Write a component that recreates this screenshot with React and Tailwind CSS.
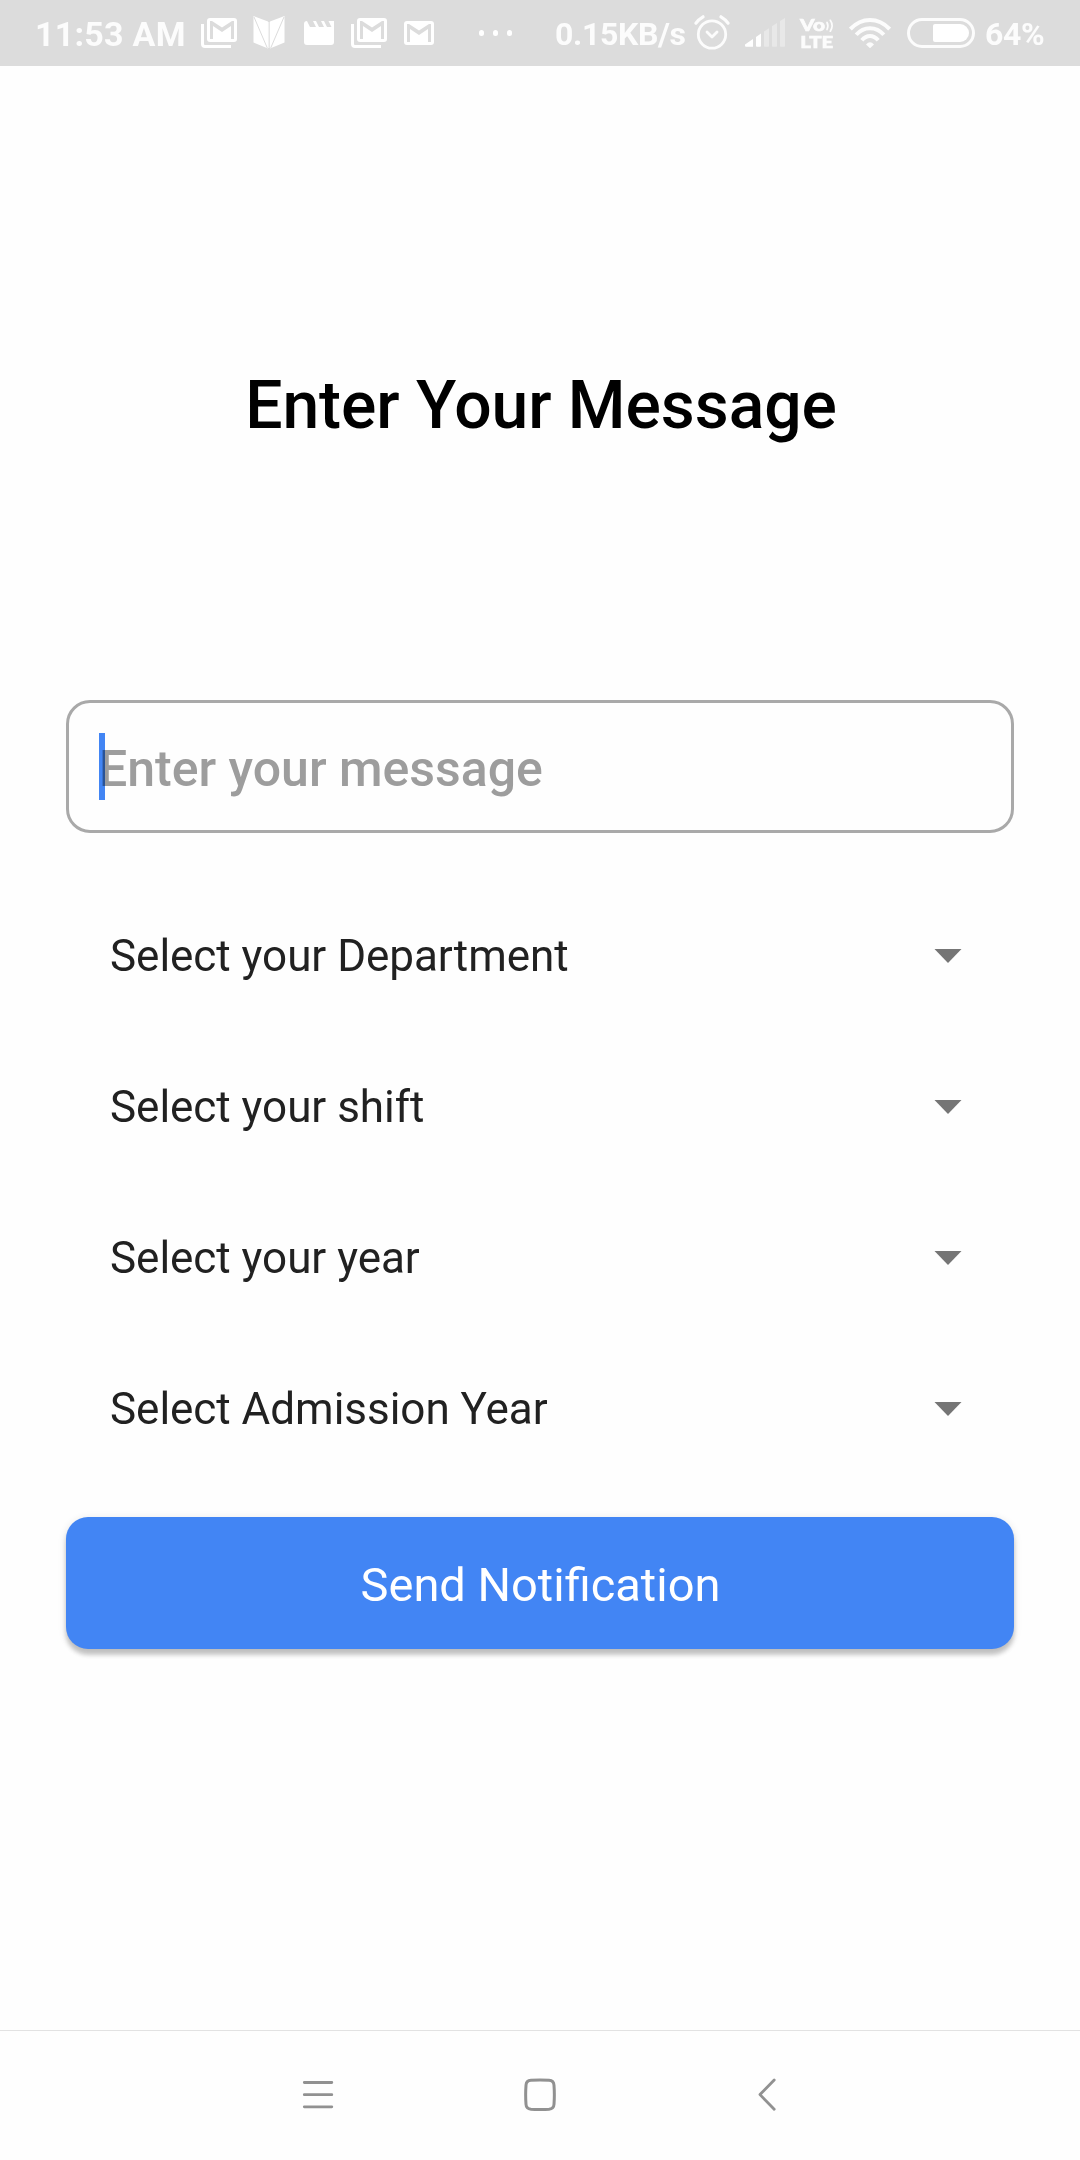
function GmailStack({ className }) {
  return (
    <svg className={className} width="36" height="30" viewBox="0 0 36 30" fill="none">
      <path d="M1.5 6V26Q1.5 28.5 4 28.5H30" stroke="#fff" strokeWidth="3" />
      <path
        fill="#fff"
        fillRule="evenodd"
        d="M9 0H33Q36 0 36 3V21Q36 24 33 24H9Q6 24 6 21V3Q6 0 9 0ZM9 3V21H12V8L21 14L30 8V21H33V3H31L21 9.5L11 3Z"
      />
    </svg>
  );
}

function Mail({ className }) {
  return (
    <svg className={className} width="30" height="24" viewBox="0 0 30 24">
      <path
        fill="#fff"
        fillRule="evenodd"
        d="M3 0H27Q30 0 30 3V21Q30 24 27 24H3Q0 24 0 21V3Q0 0 3 0ZM3 3V21H6V8L15 14L24 8V21H27V3H25L15 9.5L5 3Z"
      />
    </svg>
  );
}

function Book({ className }) {
  return (
    <svg className={className} width="32" height="33" viewBox="0 0 32 33">
      <path fill="#fff" d="M0.5 0L15 5.5V32.5L0.5 26.5Z" />
      <path fill="#fff" d="M31.5 0L17 5.5V32.5L31.5 26.5Z" />
      <path d="M15.7 6V32" stroke="#f1f1f1" strokeWidth="1.6" />
      <path d="M1 1L14.3 32M31 1L17.7 32" stroke="#dcdcdc" strokeWidth="1" />
    </svg>
  );
}

function Clapper({ className }) {
  return (
    <svg className={className} width="30" height="24" viewBox="0 0 30 24">
      <path
        fill="#fff"
        d="M3 0L6 6H12L9 0H12L15 6H20L17 0H20L23 6H27.5L24.5 0H30V21Q30 24 27 24H3Q0 24 0 21V3Q0 0 3 0Z"
      />
    </svg>
  );
}

function Alarm({ className }) {
  return (
    <svg className={className} width="36" height="35" viewBox="0 0 36 35" fill="none" stroke="#fcfcfc" strokeLinecap="round">
      <circle cx="18" cy="19.5" r="13.7" strokeWidth="2.8" />
      <path d="M2 8.2Q4.8 4.2 9 1.8M34 8.2Q31.2 4.2 27 1.8" strokeWidth="3.2" />
      <path d="M13 17L18 22L23 17" strokeWidth="2.8" strokeLinejoin="round" />
    </svg>
  );
}

function Signal({ className }) {
  return (
    <svg className={className} width="40" height="29" viewBox="0 0 40 29">
      <path fill="#fff" d="M0 26.5L8 21V28.8H1Q0 28.8 0 27.8Z" />
      <path fill="#fff" d="M11 19L16 15.5V28Q16 28.8 15 28.8H12Q11 28.8 11 28Z" />
      <g fill="#e8e8e8">
        <path d="M19 13.5L24 10.2V28Q24 28.8 23 28.8H20Q19 28.8 19 28Z" />
        <path d="M27 8.2L32 5V28Q32 28.8 31 28.8H28Q27 28.8 27 28Z" />
        <path d="M35 3L40 0V28Q40 28.8 39 28.8H36Q35 28.8 35 28Z" />
      </g>
    </svg>
  );
}

function Volte({ className }) {
  return (
    <svg className={className} width="34" height="42" viewBox="0 -6 34 42" overflow="visible">
      <g fill="#fcfcfc" stroke="#fcfcfc" strokeWidth="0.6" fontFamily="Lato, sans-serif" fontWeight="900">
        <text x="0" y="12.8" fontSize="17.5" textLength="25" lengthAdjust="spacingAndGlyphs">Vo</text>
        <text x="0.3" y="29.6" fontSize="17.5" textLength="33" lengthAdjust="spacingAndGlyphs">LTE</text>
      </g>
      <path d="M27 4.5Q28.8 7.8 27 11.5M30.3 2.3Q33.9 7.5 30.3 13.2" fill="none" stroke="#fcfcfc" strokeWidth="1.7" strokeLinecap="round" />
    </svg>
  );
}

function Wifi({ className }) {
  return (
    <svg className={className} width="42" height="30" viewBox="0 0 42 30" fill="none" stroke="#fcfcfc" strokeWidth="4">
      <path d="M1.4 11Q10 2 21 2T40.6 11" />
      <path d="M7.2 16.8Q13 10.2 21 10.2T34.8 16.8" />
      <path d="M12.8 22.3Q16.5 18 21 18T29.2 22.3" />
      <path d="M17 26.6Q19 24.3 21 24.3T25 26.6L21 30.2Z" fill="#fcfcfc" stroke="none" />
    </svg>
  );
}

function StatusBar() {
  return (
    <header className="flex h-[66px] w-full items-start bg-[#dcdcdc] text-[#fcfcfc]">
      <span className="ml-[35px] mt-[14px] w-[151px] whitespace-nowrap text-[34px] font-bold leading-[40px] tracking-[0.25px]">11:53 AM</span>
      <GmailStack className="ml-[15px] mt-[18px] shrink-0" />
      <Book className="ml-[16px] mt-[16px] shrink-0" />
      <Clapper className="ml-[19px] mt-[21px] shrink-0" />
      <GmailStack className="ml-[17px] mt-[18px] shrink-0" />
      <Mail className="ml-[17px] mt-[21px] shrink-0" />
      <span className="ml-[45px] mt-[30px] flex w-[33px] shrink-0 justify-between">
        <i className="h-[6px] w-[5px] rounded-full bg-white" />
        <i className="h-[6px] w-[5px] rounded-full bg-white" />
        <i className="h-[6px] w-[5px] rounded-full bg-white" />
      </span>
      <span className="ml-[43px] mt-[14px] w-[134px] shrink-0 whitespace-nowrap text-[32px] font-bold leading-[40px] tracking-[-0.35px]">0.15KB/s</span>
      <Alarm className="ml-[5px] mt-[15px] shrink-0" />
      <Signal className="ml-[15px] mt-[18px] shrink-0" />
      <Volte className="ml-[15px] mt-[12px] shrink-0" />
      <Wifi className="ml-[15px] mt-[18px] shrink-0" />
      <span className="ml-[16px] mt-[18px] flex h-[30px] w-[68px] shrink-0 items-center justify-end rounded-full border-[3px] border-[#fcfcfc] pr-[3px]">
        <span className="h-[18px] w-[36px] rounded-l-[2px] rounded-r-[9px] bg-white" />
      </span>
      <span className="ml-[10px] mt-[14px] whitespace-nowrap text-[32px] font-bold leading-[40px] tracking-[-0.3px]">64%</span>
    </header>
  );
}

function Dropdown({ label }) {
  return (
    <div className="flex h-[151px] items-center justify-between pl-[44px] pr-[52px] text-[44px] leading-[54px] tracking-[-0.03px] text-[#212121]">
      <span>{label}</span>
      <svg width="28" height="14" viewBox="0 0 28 14">
        <path d="M0.5 0H27.5L14 14Z" fill="#757575" />
      </svg>
    </div>
  );
}

const fields = ["Select your Department", "Select your shift", "Select your year", "Select Admission Year"];

export default function App() {
  return (
    <div className="flex h-[2160px] w-[1080px] flex-col bg-[#fefefe] font-[Roboto,sans-serif]">
      <StatusBar />
      <main className="flex flex-1 flex-col px-[66px]">
        <h1 className="mt-[301px] pl-[2px] text-center text-[66px] font-medium leading-[78px] tracking-[-0.05px] text-black">Enter Your Message</h1>
        <div className="mt-[255px] flex h-[133px] items-center rounded-[24px] border-[3px] border-[#a9a9a9] pl-[30px]">
          <div className="relative text-[50px] font-medium leading-[60px] text-[#9e9e9e]">
            <span className="absolute -top-[4px] left-0 h-[67px] w-[6px] bg-[#4285f4]" />
            <span className="relative top-[2px] mix-blend-multiply">Enter your message</span>
          </div>
        </div>
        <div className="mt-[47px] flex flex-col">
          {fields.map((f) => (
            <Dropdown key={f} label={f} />
          ))}
        </div>
        <button className="mt-[33px] h-[132px] rounded-[22px] bg-[#4285f4] pl-px pt-[4px] text-[47px] leading-[56px] text-white shadow-[0_6px_4px_rgba(0,0,0,0.19),0_2px_8px_rgba(0,0,0,0.12)]">
          Send Notification
        </button>
      </main>
      <nav className="flex h-[130px] items-start border-t border-[#e2e2e2] pt-[47px]">
        <svg className="ml-[302px]" width="32" height="33" viewBox="0 0 32 33" fill="none" stroke="#919191" strokeWidth="2.8" strokeLinecap="round">
          <path d="M2.3 4.5H29.8M2.3 16.7H29.8M2.3 28.8H29.8" />
        </svg>
        <svg className="ml-[190px]" width="32" height="33" viewBox="0 0 32 33" fill="none" stroke="#919191" strokeWidth="3">
          <path d="M7 2.3Q16 1.7 25 2.3Q29.8 2.6 30 7.3Q30.7 16.6 30 26.3Q29.8 30.8 25 31.3Q16 31.9 7 31.3Q2.2 30.8 2 26.3Q1.3 16.6 2 7.3Q2.2 2.6 7 2.3Z" />
        </svg>
        <svg className="ml-[202px]" width="18" height="33" viewBox="0 0 18 33" fill="none" stroke="#919191" strokeWidth="2.8" strokeLinecap="round" strokeLinejoin="round">
          <path d="M16.2 2L2 16.6L16.2 31.3" />
        </svg>
      </nav>
    </div>
  );
}
